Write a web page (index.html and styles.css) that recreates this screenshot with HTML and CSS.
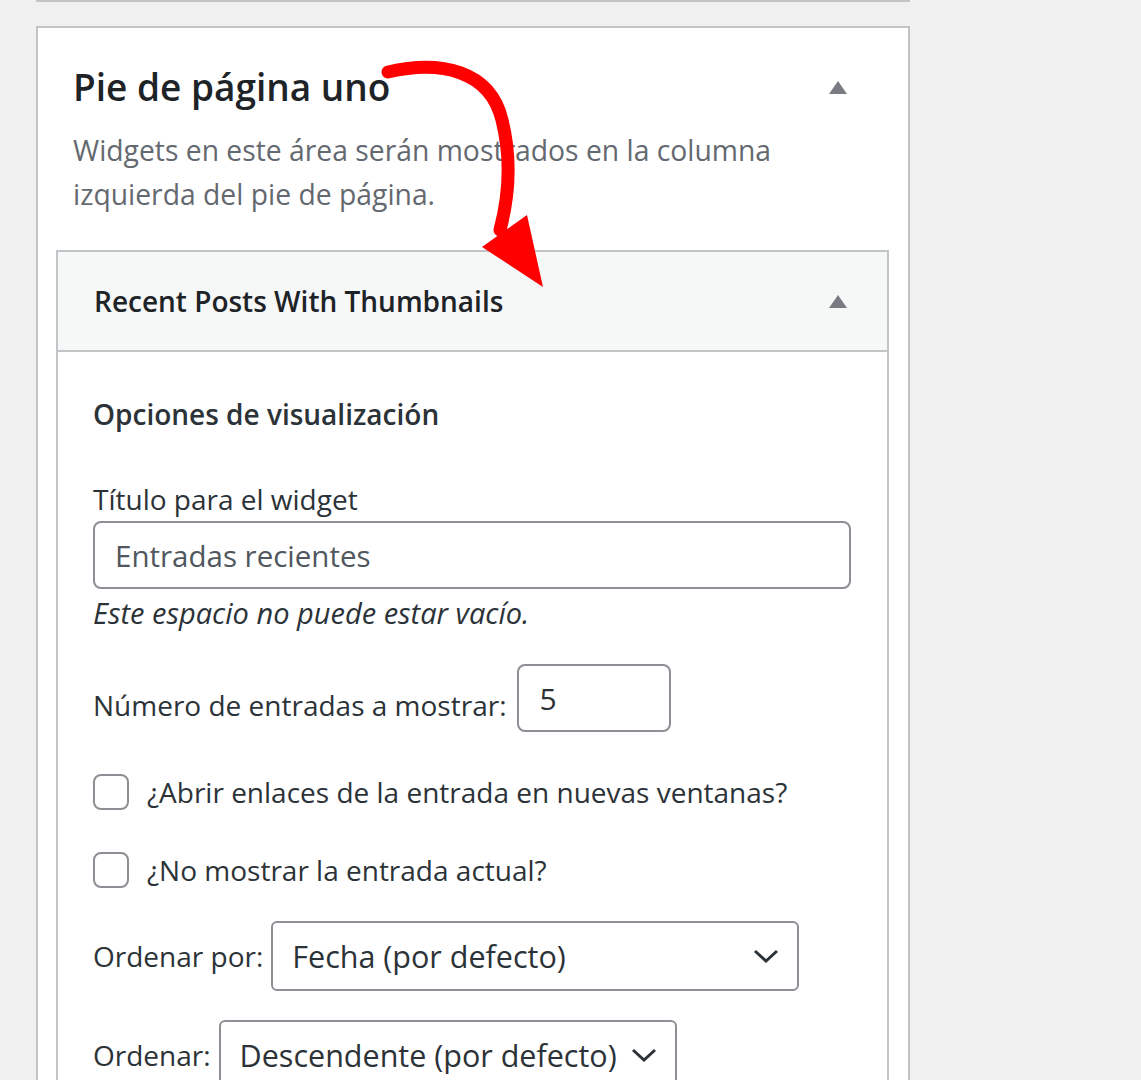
FILE: index.html
```html
<!DOCTYPE html>
<html lang="es">
  <head>
    <meta charset="UTF-8" />
    <meta name="viewport" content="width=device-width, initial-scale=1.0" />
    <title>Widgets</title>
    <link rel="stylesheet" href="styles.css">
  </head>
  <body>
    <div class="sidebars">
      <!-- previous sidebar, only its bottom edge is visible -->
      <div class="prev-card"></div>

      <!-- start pie de pagina uno -->
      <div class="sidebar-card">
        <div class="sidebar-head">
          <h2 class="sidebar-name">Pie de página uno</h2>
          <span class="toggle-arrow"></span>
        </div>
        <p class="sidebar-desc">Widgets en este área serán mostrados en la columna izquierda del pie de página.</p>

        <div class="widget">
          <div class="widget-top">
            <h3 class="widget-title">Recent Posts With Thumbnails</h3>
            <span class="toggle-arrow"></span>
          </div>
          <div class="widget-inside">
            <h4 class="section-title">Opciones de visualización</h4>

            <p class="field">
              <label class="block-label" for="rpwt-title">Título para el widget</label>
              <input id="rpwt-title" class="text-input" type="text" value="Entradas recientes" />
              <em class="field-note">Este espacio no puede estar vacío.</em>
            </p>

            <p class="field inline-field number-field">
              <label for="rpwt-number">Número de entradas a mostrar:</label>
              <input id="rpwt-number" class="number-input" type="text" value="5" />
            </p>

            <p class="field check-field">
              <input id="rpwt-blank" class="check" type="checkbox" />
              <label for="rpwt-blank">¿Abrir enlaces de la entrada en nuevas ventanas?</label>
            </p>

            <p class="field check-field">
              <input id="rpwt-current" class="check" type="checkbox" />
              <label for="rpwt-current">¿No mostrar la entrada actual?</label>
            </p>

            <p class="field inline-field select-field">
              <label for="rpwt-orderby">Ordenar por:</label>
              <span class="select-wrap orderby">
                <select id="rpwt-orderby" class="select">
                  <option>Fecha (por defecto)</option>
                </select>
                <svg class="chevron" viewBox="0 0 26 14" width="26" height="14"><path d="M2 2 L13 12 L24 2" fill="none" stroke="#2c3338" stroke-width="3" /></svg>
              </span>
            </p>

            <p class="field inline-field select-field">
              <label for="rpwt-order">Ordenar:</label>
              <span class="select-wrap order">
                <select id="rpwt-order" class="select">
                  <option>Descendente (por defecto)</option>
                </select>
                <svg class="chevron" viewBox="0 0 26 14" width="26" height="14"><path d="M2 2 L13 12 L24 2" fill="none" stroke="#2c3338" stroke-width="3" /></svg>
              </span>
            </p>
          </div>
        </div>
      </div>
      <!-- end pie de pagina uno -->
    </div>

    <!-- red annotation arrow drawn over the screenshot -->
    <svg class="annotation" width="200" height="260" viewBox="0 0 200 260">
      <path d="M8 22 C 60 10, 110 20, 122 70 C 132 110, 128 150, 120 180" fill="none" stroke="#ff0000" stroke-width="13" stroke-linecap="round" />
      <polygon points="102,197 147,165 163,237" fill="#ff0000" />
    </svg>
  </body>
</html>
```

FILE: styles.css
```css
body {
  margin: 0;
  background-color: #f0f0f1;
  font-family: "Open Sans", "Noto Sans", sans-serif;
  color: #2c3338;
}
.sidebars {
  width: 874px;
  margin-left: 36px;
}
.prev-card {
  box-sizing: border-box;
  height: 2px;
  border-bottom: 2px solid #c3c4c7;
  background-color: #ffffff;
}
.sidebar-card {
  box-sizing: border-box;
  margin-top: 24px;
  border: 2px solid #c3c4c7;
  background-color: #ffffff;
  padding: 30px 19px 40px 18px;
  min-height: 1100px;
}
.sidebar-head {
  display: flex;
  align-items: center;
  justify-content: space-between;
  padding: 0 42px 0 17px;
}
.sidebar-name {
  margin: 0;
  font-size: 37px;
  font-weight: 600;
  line-height: 58px;
  color: #1d2327;
}
.toggle-arrow {
  width: 0;
  height: 0;
  border-left: 9px solid transparent;
  border-right: 9px solid transparent;
  border-bottom: 13px solid #787c82;
}
.sidebar-desc {
  max-width: 760px;
  margin: 12px 0 34px 17px;
  font-size: 28.3px;
  line-height: 44px;
  color: #646970;
}
.widget {
  border: 2px solid #c3c4c7;
  background-color: #ffffff;
}
.widget-top {
  display: flex;
  align-items: center;
  justify-content: space-between;
  height: 98px;
  padding: 0 40px 0 36px;
  background-color: #f6f7f7;
  border-bottom: 2px solid #c3c4c7;
}
.widget-title {
  margin: 0;
  font-size: 28px;
  font-weight: 600;
  color: #1d2327;
}
.widget-inside {
  padding: 40px 36px 0 35px;
}
.section-title {
  margin: 0 0 43px 0;
  font-size: 28px;
  font-weight: 600;
  line-height: 44px;
  color: #2c3338;
}
.field {
  margin: 0 0 30px 0;
  font-size: 28px;
  line-height: 40px;
}
.block-label {
  display: block;
}
.text-input {
  box-sizing: border-box;
  display: block;
  width: 100%;
  height: 68px;
  margin-top: 2px;
  padding: 0 20px;
  border: 2px solid #8c8f94;
  border-radius: 8px;
  font-family: inherit;
  font-size: 29.5px;
  color: #50575e;
}
.field-note {
  display: block;
  margin-top: 4px;
  font-size: 29px;
}
.inline-field {
  display: flex;
  align-items: center;
  gap: 10px;
}
.number-field {
  margin-top: 31px;
  margin-bottom: 40px;
}
.number-field label {
  padding-top: 14px;
}
.number-input {
  box-sizing: border-box;
  width: 154px;
  height: 68px;
  padding: 0 21px;
  border: 2px solid #8c8f94;
  border-radius: 8px;
  font-family: inherit;
  font-size: 30px;
  color: #2c3338;
}
.check-field {
  display: flex;
  align-items: center;
  gap: 18px;
  margin-bottom: 38px;
}
.check-field + .select-field {
  margin-top: -7px;
}
.select-field {
  gap: 8px;
  margin-bottom: 29px;
}
.check {
  appearance: none;
  box-sizing: border-box;
  width: 36px;
  height: 36px;
  margin: 0;
  border: 2px solid #8c8f94;
  border-radius: 8px;
  background-color: #ffffff;
}
.select-wrap {
  position: relative;
  display: inline-block;
}
.select {
  appearance: none;
  box-sizing: border-box;
  height: 70px;
  padding: 0 40px 0 19px;
  border: 2px solid #8c8f94;
  border-radius: 6px;
  background-color: #ffffff;
  font-family: inherit;
  font-size: 30.5px;
  color: #2c3338;
}
.orderby .select {
  width: 528px;
}
.order .select {
  width: 458px;
}
.chevron {
  position: absolute;
  right: 20px;
  top: 28px;
}
.annotation {
  position: absolute;
  left: 380px;
  top: 50px;
}
```
